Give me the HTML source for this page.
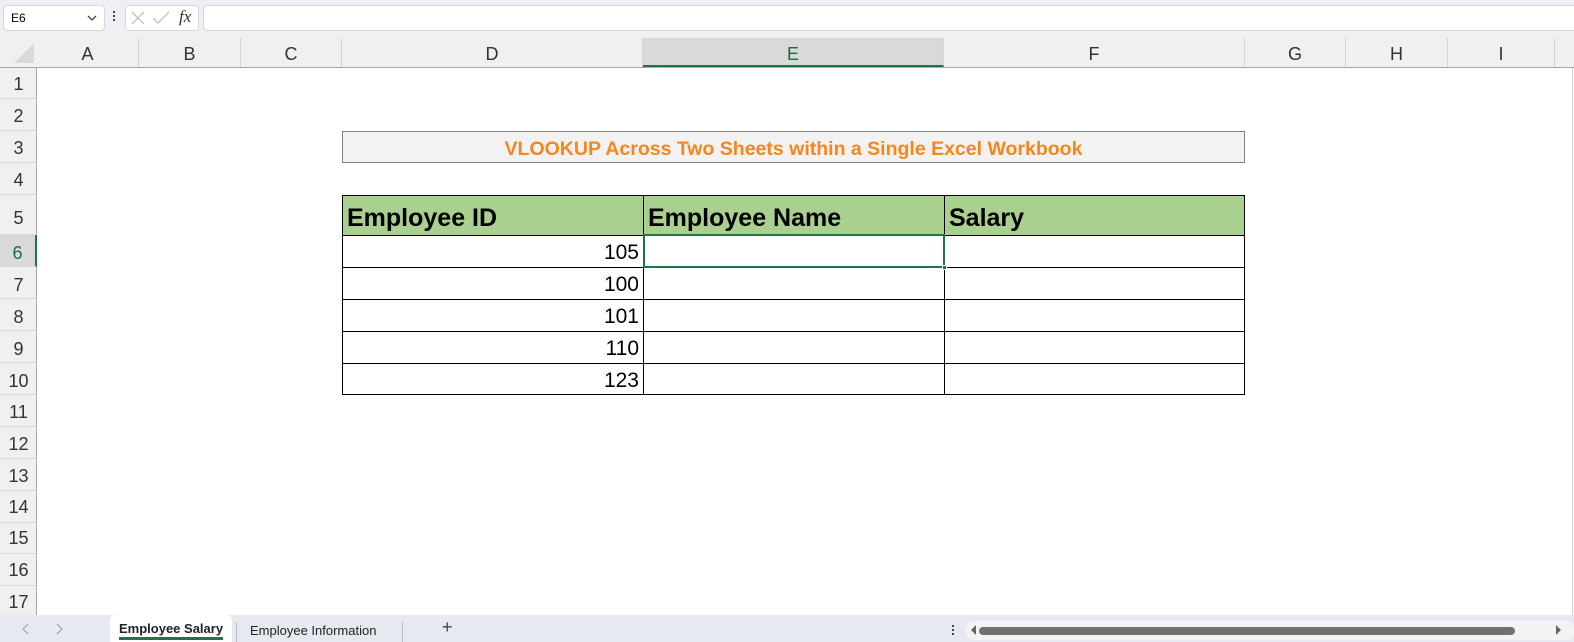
<!DOCTYPE html>
<html><head><meta charset="utf-8"><style>
*{margin:0;padding:0;box-sizing:border-box}
body{width:1574px;height:642px;overflow:hidden;background:#fff;font-family:"Liberation Sans",Arial,sans-serif;position:relative}
.a{position:absolute}
.ch{position:absolute;top:38px;height:29px;border-right:1px solid #d4d4d4;text-align:center;font-size:18px;line-height:32px;color:#333}
.rh{position:absolute;left:0;width:37px;text-align:center;font-size:18px;color:#333;border-bottom:1px solid #d8d8d8}
.c{position:absolute;border:1px solid #000;}
.h{font-weight:bold;font-size:25px;line-height:44px;padding-left:4px}
.n{font-size:21px;line-height:34px;text-align:right;padding-right:4px}
</style></head><body>
<div class="a" style="left:0;top:0;width:1574px;height:37px;background:#eef0f4"></div>
<div class="a" style="left:3px;top:5px;width:102px;height:26px;background:#fff;border:1px solid #d6d8dc;border-radius:4px;font-size:12px;line-height:24px;padding-left:7px">E6</div>
<svg class="a" style="left:87px;top:14px" width="10" height="8"><path d="M1 2l4 4 4-4" stroke="#444" fill="none" stroke-width="1.3"/></svg>
<div class="a" style="left:113px;top:11px;width:2px;height:2px;background:#444;box-shadow:0 4px #444,0 8px #444"></div>
<div class="a" style="left:125px;top:5px;width:74px;height:26px;background:#fff;border:1px solid #d6d8dc;border-radius:4px"></div>
<svg class="a" style="left:131px;top:11px" width="14" height="14"><path d="M1 1l12 12M13 1L1 13" stroke="#bbb" stroke-width="1.2"/></svg>
<svg class="a" style="left:152px;top:11px" width="18" height="14"><path d="M1 7l5 5L17 1" stroke="#bbb" fill="none" stroke-width="1.2"/></svg>
<div class="a" style="left:179px;top:7px;font-family:'Liberation Serif',serif;font-style:italic;font-size:17px;color:#333">fx</div>
<div class="a" style="left:203px;top:5px;width:1380px;height:26px;background:#fff;border:1px solid #d6d8dc;border-radius:4px"></div>
<div class="a" style="left:0;top:37px;width:1574px;height:31px;background:#f0f0f0;border-bottom:1px solid #a8a8a8"></div>
<svg class="a" style="left:13px;top:42px" width="22" height="22"><path d="M21 1V21H1Z" fill="#d9d9d9"/></svg>
<div class="ch" style="left:37px;width:102px">A</div>
<div class="ch" style="left:139px;width:102px">B</div>
<div class="ch" style="left:241px;width:101px">C</div>
<div class="ch" style="left:342px;width:301px">D</div>
<div class="ch" style="left:643px;width:301px;background:#d9d9d9;border-bottom:2px solid #217346;color:#1d6b3c">E</div>
<div class="ch" style="left:944px;width:301px">F</div>
<div class="ch" style="left:1245px;width:101px">G</div>
<div class="ch" style="left:1346px;width:102px">H</div>
<div class="ch" style="left:1448px;width:107px">I</div>
<div class="a" style="left:0;top:68px;width:37px;height:547px;background:#f0f0f0;border-right:1px solid #a8a8a8"></div>
<div class="rh" style="top:68px;height:31px;line-height:33px">1</div>
<div class="rh" style="top:99px;height:32px;line-height:34px">2</div>
<div class="rh" style="top:131px;height:32px;line-height:34px">3</div>
<div class="rh" style="top:163px;height:32px;line-height:34px">4</div>
<div class="rh" style="top:195px;height:40px;line-height:46px">5</div>
<div class="rh" style="top:235px;height:32px;line-height:36px;background:#d9d9d9;color:#1d6b3c;border-right:2px solid #217346">6</div>
<div class="rh" style="top:267px;height:32px;line-height:36px">7</div>
<div class="rh" style="top:299px;height:32px;line-height:36px">8</div>
<div class="rh" style="top:331px;height:32px;line-height:36px">9</div>
<div class="rh" style="top:363px;height:32px;line-height:36px">10</div>
<div class="rh" style="top:395px;height:32px;line-height:34px">11</div>
<div class="rh" style="top:427px;height:32px;line-height:34px">12</div>
<div class="rh" style="top:459px;height:32px;line-height:34px">13</div>
<div class="rh" style="top:491px;height:32px;line-height:32px">14</div>
<div class="rh" style="top:523px;height:31px;line-height:31px">15</div>
<div class="rh" style="top:554px;height:32px;line-height:32px">16</div>
<div class="rh" style="top:586px;height:29px;line-height:32px;border:0">17</div>
<div class="a" style="left:1572px;top:68px;width:1px;height:547px;background:#d0d0d0"></div>
<div class="a" style="left:342px;top:131px;width:903px;height:32px;background:#f2f2f2;border:1px solid #808080;text-align:center;font-weight:bold;font-size:19.5px;line-height:34px;color:#f7861c">VLOOKUP Across Two Sheets within a Single Excel Workbook</div>
<div class="a" style="left:342px;top:195px;width:903px;height:40px;background:#a9d08e"></div>
<div class="c h" style="left:342px;top:195px;width:302px;height:41px">Employee ID</div>
<div class="c h" style="left:643px;top:195px;width:302px;height:41px">Employee Name</div>
<div class="c h" style="left:944px;top:195px;width:301px;height:41px">Salary</div>
<div class="c n" style="left:342px;top:235px;width:302px;height:33px">105</div>
<div class="c n" style="left:342px;top:267px;width:302px;height:33px">100</div>
<div class="c n" style="left:342px;top:299px;width:302px;height:33px">101</div>
<div class="c n" style="left:342px;top:331px;width:302px;height:33px">110</div>
<div class="c n" style="left:342px;top:363px;width:302px;height:32px">123</div>
<div class="c" style="left:643px;top:235px;width:302px;height:33px"></div>
<div class="c" style="left:643px;top:267px;width:302px;height:33px"></div>
<div class="c" style="left:643px;top:299px;width:302px;height:33px"></div>
<div class="c" style="left:643px;top:331px;width:302px;height:33px"></div>
<div class="c" style="left:643px;top:363px;width:302px;height:32px"></div>
<div class="c" style="left:944px;top:235px;width:301px;height:33px"></div>
<div class="c" style="left:944px;top:267px;width:301px;height:33px"></div>
<div class="c" style="left:944px;top:299px;width:301px;height:33px"></div>
<div class="c" style="left:944px;top:331px;width:301px;height:33px"></div>
<div class="c" style="left:944px;top:363px;width:301px;height:32px"></div>
<div class="a" style="left:643px;top:234px;width:302px;height:34px;border:2px solid #217346"></div>
<div class="a" style="left:942px;top:265px;width:5px;height:5px;background:#217346;border:1px solid #fff"></div>
<div class="a" style="left:0;top:615px;width:1574px;height:27px;background:#e6e9ef"></div>
<svg class="a" style="left:22px;top:623px" width="8" height="12"><path d="M6 1L1 6l5 5" stroke="#999" fill="none"/></svg>
<svg class="a" style="left:55px;top:623px" width="8" height="12"><path d="M2 1l5 5-5 5" stroke="#999" fill="none"/></svg>
<div class="a" style="left:110px;top:615px;width:122px;height:27px;background:#fff;border-radius:5px 5px 0 0"></div>
<div class="a" style="left:119px;top:621px;font-size:13px;font-weight:bold;color:#222">Employee Salary</div>
<div class="a" style="left:119px;top:637px;width:104px;height:3px;background:#217346"></div>
<div class="a" style="left:236px;top:622px;width:1px;height:20px;background:#bbb"></div>
<div class="a" style="left:250px;top:623px;font-size:13px;color:#222">Employee Information</div>
<div class="a" style="left:402px;top:622px;width:1px;height:20px;background:#bbb"></div>
<div class="a" style="left:442px;top:617px;font-size:18px;color:#444">+</div>
<div class="a" style="left:952px;top:625px;width:2px;height:2px;background:#444;box-shadow:0 4px #444,0 8px #444"></div>
<div class="a" style="left:966px;top:621px;width:608px;height:19px;background:#f3f3f3;border-radius:8px"></div>
<svg class="a" style="left:970px;top:625px" width="8" height="10"><path d="M6 0L1 5l5 5Z" fill="#666"/></svg>
<div class="a" style="left:979px;top:627px;width:536px;height:8px;background:#717171;border-radius:4px"></div>
<svg class="a" style="left:1555px;top:625px" width="8" height="10"><path d="M1 0l5 5-5 5Z" fill="#666"/></svg>
</body></html>
